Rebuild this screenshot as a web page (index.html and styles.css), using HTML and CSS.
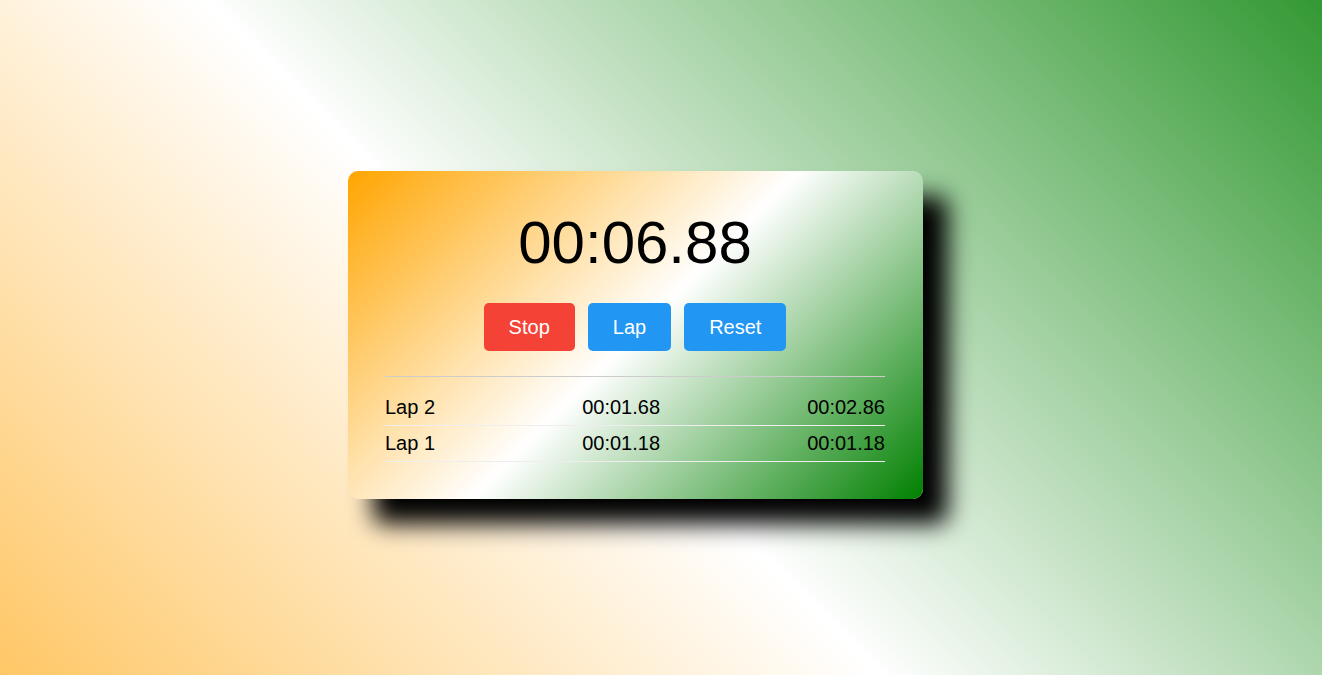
FILE: index.html
```html
<!DOCTYPE html>
<html lang="en">
<head>
<meta charset="utf-8">
<title>Stopwatch</title>
<link rel="stylesheet" href="styles.css">
</head>
<body>
  <main class="stopwatch">
    <div class="display">00:06.88</div>
    <div class="controls">
      <button class="btn btn-stop">Stop</button>
      <button class="btn btn-blue">Lap</button>
      <button class="btn btn-blue">Reset</button>
    </div>
    <ul class="laps">
      <li class="lap"><span>Lap 2</span><span>00:01.68</span><span>00:02.86</span></li>
      <li class="lap"><span>Lap 1</span><span>00:01.18</span><span>00:01.18</span></li>
    </ul>
  </main>
</body>
</html>
```
FILE: styles.css
```css
* { box-sizing: border-box; }

html, body {
  margin: 0;
  padding: 0;
}

body {
  min-height: 100vh;
  display: flex;
  align-items: center;
  justify-content: center;
  font-family: "Liberation Sans", Arial, sans-serif;
  background: linear-gradient(45deg, #ffc766 0%, #ffffff 44%, #339933 100%);
}

.stopwatch {
  width: 575px;
  padding: 38px 37.5px 37.5px;
  margin: 0 52px 5px 0;
  border-radius: 10px;
  background: linear-gradient(135deg, #ffa500 0%, #ffffff 50%, #008000 100%);
  box-shadow: 25px 25px 25px #000;
  display: flex;
  flex-direction: column;
  align-items: center;
}

.display {
  font-size: 60px;
  line-height: 67px;
  color: #000;
}

.controls {
  display: flex;
  gap: 13px;
  margin-top: 27px;
}

.btn {
  font-family: inherit;
  font-size: 20px;
  line-height: 24px;
  padding: 12px 25px;
  border: 0;
  border-radius: 5px;
  color: #fff;
  cursor: pointer;
}

.btn-stop { background: #f44336; }
.btn-blue { background: #2196f3; }

.laps {
  list-style: none;
  margin: 25px 0 0;
  padding: 13px 0 0;
  width: 500px;
  border-top: 1px solid #ccc;
}

.lap {
  display: flex;
  justify-content: space-between;
  font-size: 20px;
  line-height: 23px;
  padding: 6px 0;
  border-bottom: 1px solid #eee;
  color: #000;
}
```
